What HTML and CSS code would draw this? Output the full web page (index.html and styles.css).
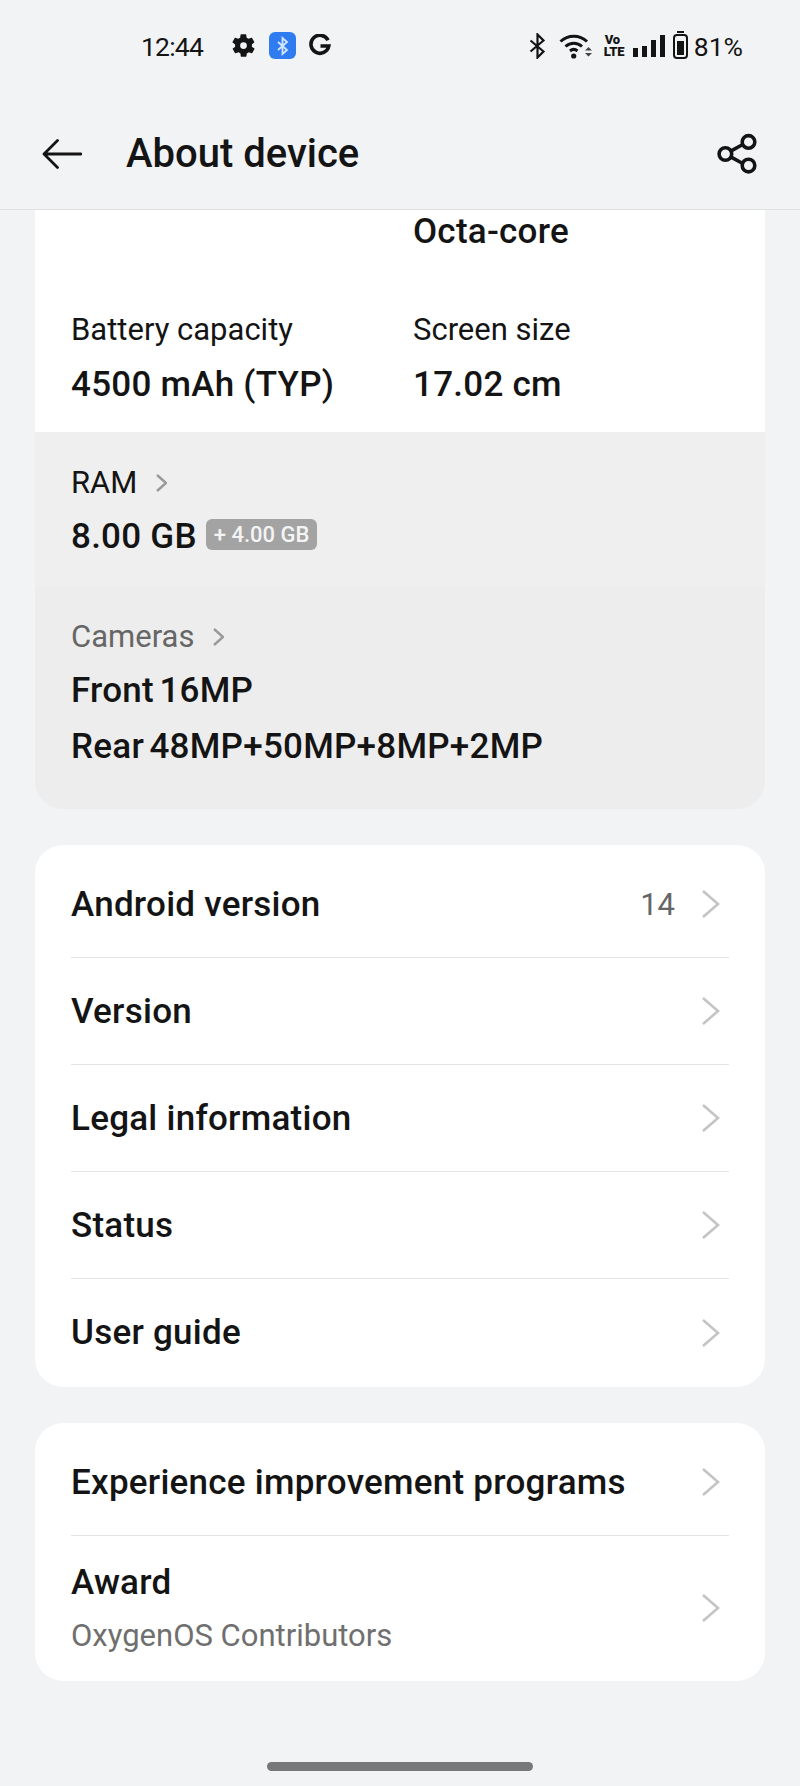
FILE: index.html
```html
<!DOCTYPE html>
<html lang="en">
<head>
  <meta charset="UTF-8" />
  <title>About device</title>
  <link rel="stylesheet" href="styles.css">
</head>

<body>

  <div class="status-bar">
    <div class="status-left">
      <span class="clock">12:44</span>
      <svg class="ic-gear" width="27" height="27" viewBox="0 0 24 24"><path fill="#141414" fill-rule="evenodd" d="M19.400 13c.1-.3.1-.7.1-1s0-.7-.1-1l2.100-1.600c.2-.2.2-.4.1-.6l-2-3.500c-.1-.2-.4-.3-.6-.2l-2.500 1c-.5-.4-1.100-.7-1.700-1l-.4-2.600c0-.3-.2-.5-.5-.5h-4c-.3 0-.5.2-.5.4l-.4 2.700c-.6.2-1.200.6-1.700 1l-2.500-1c-.2-.1-.5 0-.6.2l-2 3.500c-.1.2-.1.5.1.6L4.600 11c-.1.3-.1.700-.1 1s0 .7.1 1l-2.100 1.600c-.2.2-.2.4-.1.6l2 3.500c.1.2.4.3.6.2l2.500-1c.5.4 1.100.7 1.700 1l.4 2.600c0 .3.2.5.5.5h4c.3 0 .5-.2.5-.4l.4-2.700c.6-.2 1.200-.6 1.700-1l2.500 1c.2.1.5 0 .6-.2l2-3.500c.1-.2.1-.5-.1-.6zM12 15a3 3 0 1 1 0-6 3 3 0 0 1 0 6z"/></svg>
      <span class="bt-badge">
        <svg width="18" height="20" viewBox="0 0 18 20"><path fill="none" stroke="#d3e5ff" stroke-width="1.800" d="M4 6l9 8-4.500 4V2L13 6l-9 8"/></svg>
      </span>
      <svg class="ic-g" width="24" height="24" viewBox="0 0 24 24"><path fill="none" stroke="#141414" stroke-width="3.600" d="M20 6.200A9 9 0 1 0 20.800 12H12.500"/></svg>
    </div>
    <div class="status-right">
      <svg width="17" height="26" viewBox="0 0 17 26"><path fill="none" stroke="#141414" stroke-width="2.200" d="M1.500 7.500l13 11-6 6V1.500l6 6-13 11"/></svg>
      <svg class="ic-wifi" width="34" height="26" viewBox="0 0 34 26"><g fill="none" stroke="#141414" stroke-width="3"><path d="M1.500 8.500c7.500-7 19-7 26.500 0"/><path d="M6.500 13.500c4.800-4.400 11.700-4.400 16.500 0"/><path d="M11 18c2.300-2 5.200-2 7.500 0"/></g><circle cx="14.700" cy="23" r="2.600" fill="#141414"/><path fill="#444" d="M26 17.500l3.500-3.500 3.500 3.500zM26 20l3.500 3.500 3.500-3.500z"/></svg>
      <span class="volte">Vo<br>LTE</span>
      <span class="signal"><i class="b1"></i><i class="b2"></i><i class="b3"></i><i class="b4"></i></span>
      <span class="battery"><i></i></span>
      <span class="pct">81%</span>
    </div>
  </div>

  <div class="toolbar">
    <svg class="back" width="40" height="30" viewBox="0 0 40 30"><path fill="none" stroke="#141414" stroke-width="2.800" stroke-linecap="round" stroke-linejoin="round" d="M39 15H2M15.500 1.500L2 15l13.500 13.500"/></svg>
    <h1>About device</h1>
    <svg class="share" width="42" height="42" viewBox="0 0 40 40"><g fill="none" stroke="#141414" stroke-width="3.400"><circle cx="8" cy="20" r="6"/><circle cx="30" cy="8.500" r="6"/><circle cx="30" cy="31" r="6"/><path d="M13.500 17l11-6M13.500 23l11 6"/></g></svg>
  </div>

  <div class="content">
    <div class="spec-card">
      <div class="spec-grid">
        <div class="spec spec-top"><span class="val"></span></div>
        <div class="spec spec-top"><span class="val">Octa-core</span></div>
        <div class="spec"><span class="lbl">Battery capacity</span><span class="val">4500 mAh (TYP)</span></div>
        <div class="spec"><span class="lbl">Screen size</span><span class="val">17.02 cm</span></div>
      </div>
      <div class="spec-ram">
        <span class="lbl">RAM <svg class="mini-chev" width="12" height="20" viewBox="0 0 12 20"><path d="M2 2l9 8-9 8"/></svg></span>
        <span class="val">8.00 GB <em class="tag">+ 4.00 GB</em></span>
      </div>
      <div class="spec-cam">
        <span class="lbl lbl-grey">Cameras <svg class="mini-chev" width="12" height="20" viewBox="0 0 12 20"><path d="M2 2l9 8-9 8"/></svg></span>
        <span class="val val-first">Front 16MP</span>
        <span class="val">Rear 48MP+50MP+8MP+2MP</span>
      </div>
    </div>

    <div class="card">
      <div class="row"><span class="row-title">Android version</span><span class="row-val">14</span><svg class="chev" width="20" height="30" viewBox="0 0 20 30"><path d="M2 2l15 13L2 28"/></svg></div>
      <div class="row"><span class="row-title">Version</span><svg class="chev" width="20" height="30" viewBox="0 0 20 30"><path d="M2 2l15 13L2 28"/></svg></div>
      <div class="row"><span class="row-title">Legal information</span><svg class="chev" width="20" height="30" viewBox="0 0 20 30"><path d="M2 2l15 13L2 28"/></svg></div>
      <div class="row"><span class="row-title">Status</span><svg class="chev" width="20" height="30" viewBox="0 0 20 30"><path d="M2 2l15 13L2 28"/></svg></div>
      <div class="row"><span class="row-title">User guide</span><svg class="chev" width="20" height="30" viewBox="0 0 20 30"><path d="M2 2l15 13L2 28"/></svg></div>
    </div>

    <div class="card">
      <div class="row"><span class="row-title">Experience improvement programs</span><svg class="chev" width="20" height="30" viewBox="0 0 20 30"><path d="M2 2l15 13L2 28"/></svg></div>
      <div class="row row-tall">
        <div class="row-text">
          <span class="row-title">Award</span>
          <span class="row-sub">OxygenOS Contributors</span>
        </div>
        <svg class="chev" width="20" height="30" viewBox="0 0 20 30"><path d="M2 2l15 13L2 28"/></svg>
      </div>
    </div>
  </div>

  <div class="home-bar"></div>

</body>
</html>
```

FILE: styles.css
```css
body {
  margin: 0;
  width: 800px;
  height: 1786px;
  overflow: hidden;
  font-family: Roboto, "Liberation Sans", sans-serif;
  background: #f2f3f5;
  color: #141414;
  position: relative;
}

/* status bar */
.status-bar {
  height: 90px;
  box-sizing: border-box;
  padding: 1px 57px 0 141px;
  display: flex;
  justify-content: space-between;
  align-items: center;
}

.status-left,
.status-right {
  display: flex;
  align-items: center;
}

.clock,
.pct {
  font-size: 26.500px;
  padding-top: 2px;
}

.clock {
  letter-spacing: -0.8px;
}

.ic-gear {
  margin-left: 27px;
}

.bt-badge {
  width: 27px;
  height: 27px;
  margin: 0 12px;
  border-radius: 6px;
  background: #2f7cf0;
  display: flex;
  align-items: center;
  justify-content: center;
}

.status-right .ic-wifi {
  margin-left: 13px;
}

.volte {
  margin-left: 11px;
  font-size: 13px;
  line-height: 11.500px;
  font-weight: 900;
  text-align: center;
  width: 17px;
  letter-spacing: -0.2px;
}

.signal {
  display: flex;
  align-items: flex-end;
  gap: 4px;
  height: 22px;
  margin-left: 12px;
}

.signal i {
  display: block;
  width: 5px;
  background: #141414;
}

.signal .b1 { height: 9px; }
.signal .b2 { height: 11px; }
.signal .b3 { height: 17px; }
.signal .b4 { height: 22px; }

.battery {
  position: relative;
  width: 15px;
  height: 25px;
  margin-left: 8px;
  margin-top: 2px;
  border: 2px solid #141414;
  border-radius: 4px;
  padding: 2px;
  box-sizing: border-box;
  display: flex;
  align-items: flex-end;
}

.battery::before {
  content: "";
  position: absolute;
  top: -5px;
  left: 2px;
  width: 7px;
  height: 2px;
  background: #141414;
}

.battery i {
  display: block;
  width: 100%;
  height: 81%;
  background: #141414;
}

.pct {
  margin-left: 6px;
}

/* toolbar */
.toolbar {
  height: 120px;
  box-sizing: border-box;
  border-bottom: 1px solid #dfe0e2;
  display: flex;
  align-items: center;
  padding: 8px 41px 0 42px;
}

.toolbar .back {
  margin-right: 44px;
  flex: none;
}

.toolbar h1 {
  margin: 0;
  font-size: 40px;
  font-weight: 500;
  flex: 1;
}

/* content */
.content {
  padding: 0 35px;
}

.spec-card {
  border-radius: 0 0 28px 28px;
  overflow: hidden;
  margin-bottom: 36px;
}

.spec-grid {
  background: #fff;
  display: grid;
  grid-template-columns: 342px 1fr;
  padding: 0 36px;
  height: 222px;
  align-content: start;
}

.spec {
  display: flex;
  flex-direction: column;
}

.spec-top {
  height: 102px;
}

.lbl {
  font-size: 31px;
  line-height: 36px;
  display: flex;
  align-items: center;
  gap: 18px;
}

.lbl-grey {
  color: #666;
}

.val {
  font-size: 35px;
  font-weight: 500;
  letter-spacing: 0.25px;
  line-height: 44px;
  margin-top: 15px;
}

.spec-top .val {
  margin-top: 0;
}

.spec-ram {
  background: #efefef;
  padding: 33px 36px 0;
  height: 154px;
  box-sizing: border-box;
  display: flex;
  flex-direction: column;
}

.spec-ram .val {
  margin-top: 14px;
}

.spec-cam {
  background: #ededed;
  padding: 33px 36px 0;
  height: 223px;
  box-sizing: border-box;
  display: flex;
  flex-direction: column;
  word-spacing: -3.500px;
}

.spec-cam .val {
  margin-top: 12px;
}

.spec-cam .val-first {
  margin-top: 14px;
}

.tag {
  font-style: normal;
  font-size: 22px;
  font-weight: 500;
  letter-spacing: 0;
  line-height: 31px;
  color: #f4f4f4;
  background: #a3a3a3;
  border-radius: 6px;
  padding: 0 8px;
  display: inline-block;
  vertical-align: 6px;
}

.mini-chev path {
  fill: none;
  stroke: #999;
  stroke-width: 2.400;
}

.card {
  background: #fff;
  border-radius: 28px;
  padding: 6px 36px 1px;
  margin-bottom: 36px;
}

.row {
  height: 107px;
  display: flex;
  align-items: center;
  border-bottom: 1px solid #e4e4e4;
  box-sizing: border-box;
}

.row:last-child {
  border-bottom: none;
}

.row-tall {
  height: 144px;
}

.row-title {
  font-size: 35px;
  font-weight: 500;
  letter-spacing: 0.25px;
  flex: 1;
}

.row-val {
  font-size: 31px;
  color: #666;
  margin-right: 26px;
}

.row-text {
  flex: 1;
  display: flex;
  flex-direction: column;
}

.row-sub {
  font-size: 31px;
  color: #6f6f6f;
  margin-top: 14px;
}

.chev {
  flex: none;
  margin-right: 8px;
}

.chev path {
  fill: none;
  stroke: #c4c4c4;
  stroke-width: 2.600;
}

.home-bar {
  position: absolute;
  left: 267px;
  bottom: 15px;
  width: 266px;
  height: 9px;
  border-radius: 5px;
  background: #77787a;
}
```
